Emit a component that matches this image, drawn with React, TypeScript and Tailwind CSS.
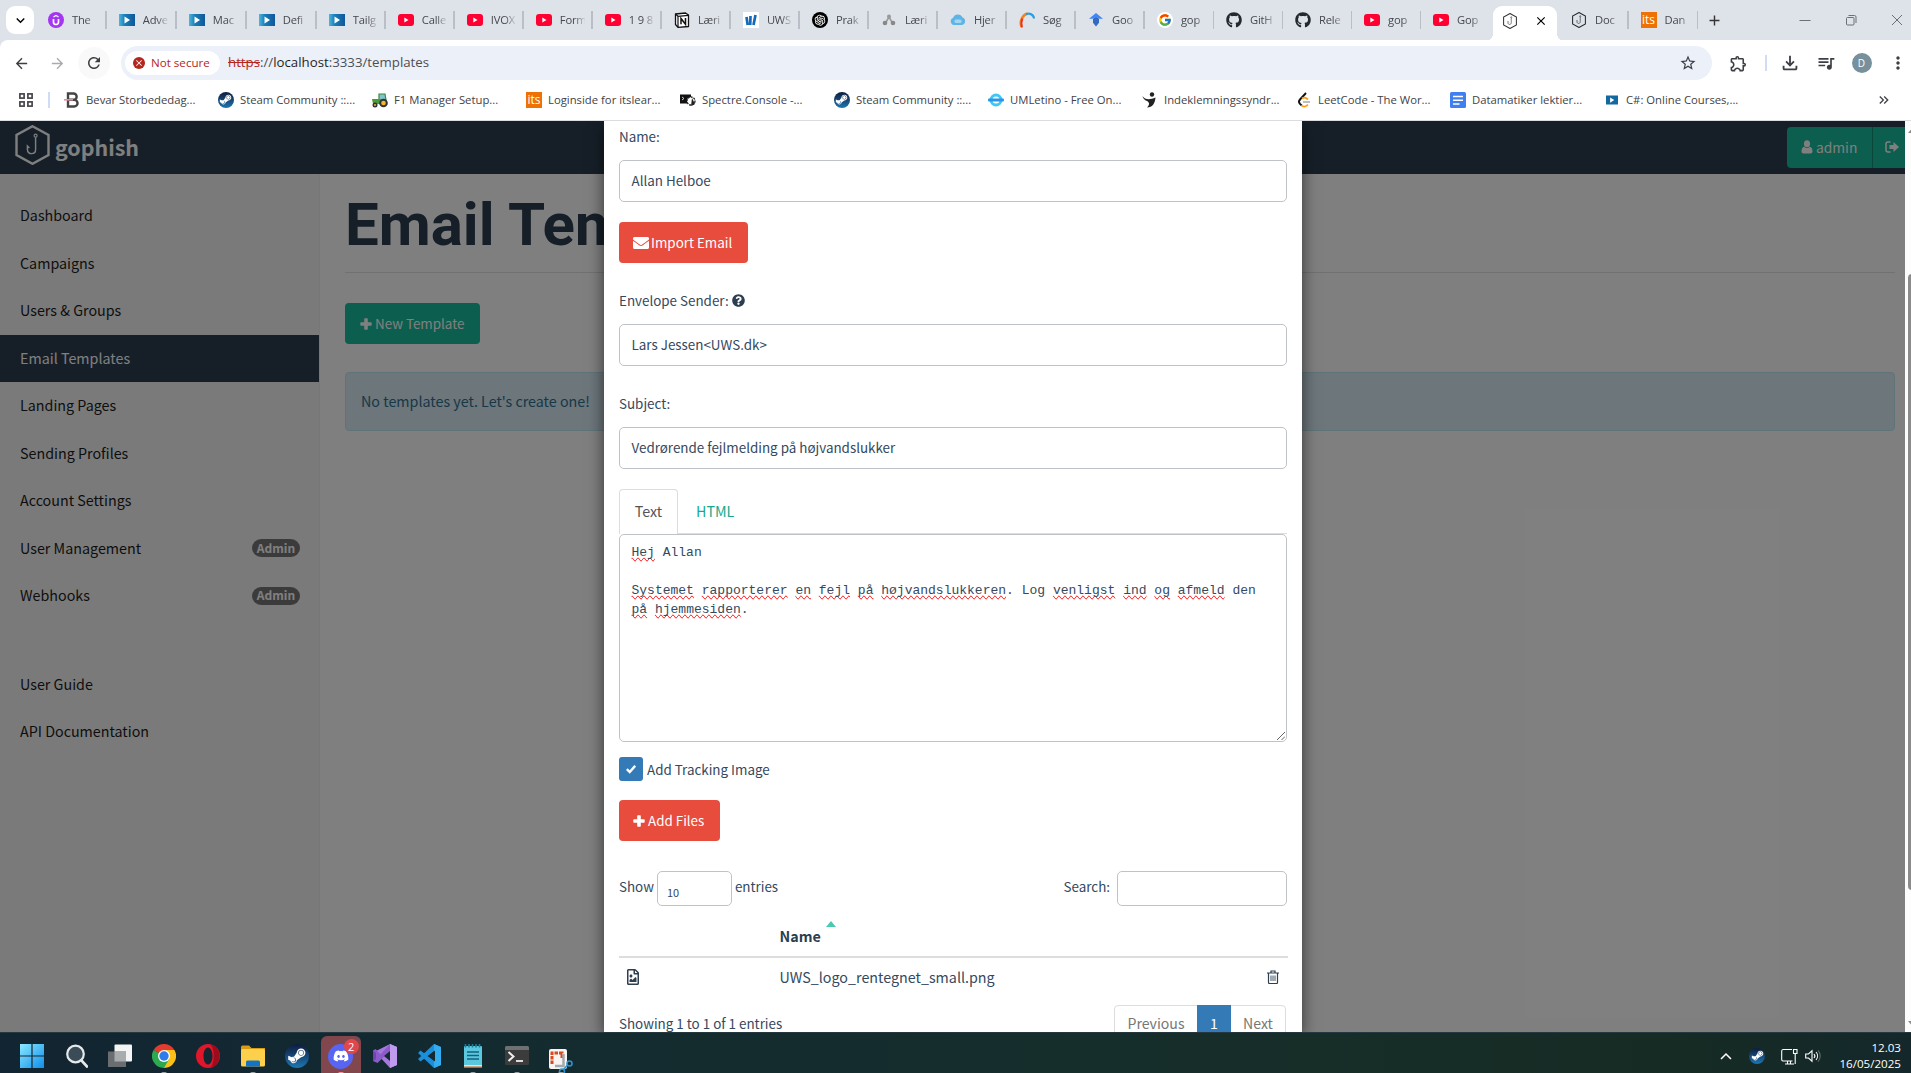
import React from 'react';
import {
  FaEnvelope,
  FaQuestionCircle,
  FaRegFileImage,
  FaGithub,
  FaSteamSymbol,
  FaDiscord,
} from 'react-icons/fa';
import { FcGoogle } from 'react-icons/fc';
import { AiOutlineOpenAI } from 'react-icons/ai';
import {
  MdArrowBack,
  MdArrowForward,
  MdRefresh,
  MdStarBorder,
  MdOutlineExtension,
  MdOutlineFileDownload,
  MdQueueMusic,
  MdMoreVert,
  MdClose,
  MdAdd,
  MdKeyboardArrowDown,
  MdKeyboardDoubleArrowRight,
} from 'react-icons/md';

/* ---------- favicons ---------- */

const Udemy = () => (
  <svg viewBox="0 0 16 16" className="size-4">
    <circle cx="8" cy="8" r="8" fill="#a435f0" />
    <path d="M5.500 7v3.200a2.500 2.300 0 0 0 5 0V7" fill="none" stroke="#fff" strokeWidth="1.700" />
    <path d="M5.500 5 8 3.500 10.500 5" fill="none" stroke="#fff" strokeWidth="1.300" />
  </svg>
);

const Play = () => (
  <svg viewBox="0 0 16 12" className="h-3 w-4">
    <defs>
      <linearGradient id="play" x1="0" x2="1">
        <stop offset="0" stopColor="#4db5e0" />
        <stop offset=".35" stopColor="#1b7fb8" />
        <stop offset="1" stopColor="#10579a" />
      </linearGradient>
    </defs>
    <rect width="16" height="12" fill="url(#play)" />
    <path d="M5.500 2.500v7l5.500-3.500z" fill="#fff" />
  </svg>
);

const SmallPlay = () => (
  <svg viewBox="0 0 16 12" className="h-2.5 w-3">
    <rect width="16" height="12" fill="#12699f" />
    <path d="M5.500 2.500v7l5.500-3.500z" fill="#fff" />
  </svg>
);

const YouTube = () => (
  <svg viewBox="0 0 16 12" className="h-3 w-4">
    <rect width="16" height="12" rx="3" fill="#ff0033" />
    <path d="M6.300 3.500v5L10.500 6z" fill="#fff" />
  </svg>
);

const Notion = () => (
  <svg viewBox="0 0 16 16" className="size-4">
    <path d="M1.500 2 11.500 1l3 2v11.500l-10.500.8L1.500 12.500z" fill="#fff" stroke="#111" strokeWidth="1.300" strokeLinejoin="round" />
    <path d="M1.500 2 4 4.300l10.500-.9M4 4.300v11" fill="none" stroke="#111" strokeWidth="1.200" />
    <path d="M7 12.300V6.500l4.500 5.800V6" fill="none" stroke="#111" strokeWidth="1.500" />
  </svg>
);

const Uws = () => (
  <svg viewBox="0 0 16 16" className="size-4">
    <rect width="16" height="16" fill="#fff" />
    <path d="M3.500 5l1.200 8M7.500 4l-.3 9M12.500 3l-2 10" stroke="#1469b8" strokeWidth="2.700" />
  </svg>
);

const OpenAi = () => (
  <span className="flex size-4 items-center justify-center rounded-full bg-black text-white">
    <AiOutlineOpenAI className="size-3.5" />
  </span>
);

const Nodes = () => (
  <svg viewBox="0 0 16 16" className="size-4">
    <path d="M8 5 4.500 11M8 5l3.500 6" stroke="#999" strokeWidth="1.500" />
    <circle cx="8" cy="4.500" r="2" fill="#999" />
    <circle cx="4" cy="11" r="2.300" fill="#888" />
    <circle cx="12" cy="11" r="2.300" fill="#888" />
  </svg>
);

const Cloud = () => (
  <svg viewBox="0 0 16 16" className="size-4">
    <path d="M4 13a3.800 3.800 0 0 1-.8-7.300A5 5 0 0 1 12.500 5.500 3.900 3.900 0 0 1 12 13z" fill="#5fb4e6" />
    <rect x="4.500" y="7.500" width="7" height="3.500" rx="1.500" fill="#a4d6f3" />
  </svg>
);

const Arc = () => (
  <svg viewBox="0 0 16 16" className="size-4">
    <path d="M2.500 15C.5 9 3.500 3 8.500 1.500" fill="none" stroke="#f58220" strokeWidth="2.600" />
    <path d="M3 15.500C2 12.500 2.300 9 3.500 6.500" fill="none" stroke="#e4332d" strokeWidth="1.800" />
    <path d="M7 2.200C10.500.5 14.500 2.500 15.200 6.500" fill="none" stroke="#2a9fe0" strokeWidth="2.200" />
  </svg>
);

const Scholar = () => (
  <svg viewBox="0 0 16 16" className="size-4">
    <path d="M8 1 1 6.800h4a3.400 3.400 0 0 1 6 0h4z" fill="#4285f4" />
    <path d="M5 6.800a3.400 3.400 0 0 1 6 0v4L8 14.500l-3-3.700z" fill="#356ac3" />
  </svg>
);

const Google = () => (
  <span className="flex size-4 items-center justify-center rounded-full bg-white">
    <FcGoogle className="size-3.5" />
  </span>
);

const Its = () => (
  <span className="flex size-4 items-center justify-center bg-[#ee7203] text-xs leading-4 text-white">its</span>
);

const Hex = ({ className = 'h-4 w-4', w = 1.3 }: { className?: string; w?: number }) => (
  <svg viewBox="0 0 35 40" className={className} fill="none" stroke="currentColor">
    <path d="M17.500 1.200 33.500 10v20l-16 8.800L1.500 30V10z" strokeWidth={w} />
    <circle cx="20.600" cy="10.700" r="1.500" strokeWidth={w * 0.5} />
    <path d="M20.600 12.200V24.500c0 5.500-8.200 5.500-8.200 0v-3.500l2 2" strokeWidth={w * 0.6} />
  </svg>
);

const Bevar = () => (
  <svg viewBox="0 0 16 16" className="size-4">
    <path d="M4 1.500h5.500a3 3 0 0 1 0 6.300H4zM4 7.800h6.200a3.200 3.200 0 0 1 0 6.700H4z" fill="none" stroke="#444" strokeWidth="2.400" />
    <path d="M0 7.800h9" stroke="#e58b9d" strokeWidth="1.600" />
  </svg>
);

const Steam = ({ className = 'size-4' }: { className?: string }) => (
  <span className={`${className} flex items-center justify-center rounded-full bg-gradient-to-b from-[#0d1c3f] to-[#1b78b3] text-white`}>
    <FaSteamSymbol className="size-[82%]" />
  </span>
);

const Tractor = () => (
  <svg viewBox="0 0 16 16" className="size-4">
    <path d="M7 2h6l1 6H7z" fill="#7fc6c9" stroke="#3d8a34" strokeWidth="1.200" />
    <path d="M0 7h9v5H1z" fill="#4a9c3a" />
    <circle cx="11.500" cy="11" r="4.300" fill="#333" />
    <circle cx="11.500" cy="11" r="2.300" fill="#f3b929" />
    <circle cx="3" cy="13" r="2.500" fill="#333" />
    <circle cx="3" cy="13" r="1" fill="#f3b929" />
  </svg>
);

const Spectre = () => (
  <svg viewBox="0 0 16 16" className="size-4">
    <rect y="2.500" width="11" height="9" fill="#111" />
    <path d="M2 5l2 1.500-2 1.500" stroke="#ccc" fill="none" />
    <circle cx="11" cy="9" r="4" fill="#fff" stroke="#222" strokeWidth="1.300" strokeDasharray="2 1" />
    <path d="M12 6l3 6-4 2" fill="#222" />
  </svg>
);

const Uml = () => (
  <svg viewBox="0 0 16 16" className="size-4">
    <circle cx="8" cy="8" r="5" fill="none" stroke="#3fc8f5" strokeWidth="3" />
    <rect y="6.600" width="16" height="2.800" rx="1" fill="#2a95ea" />
  </svg>
);

const Person = () => (
  <svg viewBox="0 0 16 16" className="size-4">
    <circle cx="10" cy="2.500" r="2.200" fill="#222" />
    <path d="M.5 4c2.500 4 7.500 4 13 1.500-.5 6-3 10-8.500 10 3-3 2.500-5 0-6.500C2.500 8 1 6.500.5 4z" fill="#222" />
  </svg>
);

const Leet = () => (
  <svg viewBox="0 0 16 16" className="size-4">
    <path d="M10 1 3.500 8" stroke="#111" strokeWidth="1.900" fill="none" />
    <path d="M3.800 7.600c-1.200 1.500-1 2.800 0 4l2 2" stroke="#111" strokeWidth="1.900" fill="none" />
    <path d="M5.500 13.200c1.500 2 4 2 6.500-.5M6 6.500c2-1.500 4-1 6 1" stroke="#ffa116" strokeWidth="1.900" fill="none" />
    <path d="M7 10h7" stroke="#b3b3b3" strokeWidth="1.700" />
  </svg>
);

const Docs = () => (
  <svg viewBox="0 0 16 16" className="size-4">
    <rect width="16" height="16" rx="1.500" fill="#3f7ff0" />
    <path d="M3 4.500h10M3 8.200h10M3 12h6.500" stroke="#fff" strokeWidth="1.500" />
  </svg>
);

/* ---------- shared glyphs ---------- */

const Plus = ({ className }: { className: string }) => (
  <svg viewBox="0 0 12 12" className={`${className} size-3`}>
    <path
      d="M5 .3h2a.8.8 0 0 1 .8.8v3.100h3.100a.8.8 0 0 1 .8.8v2a.8.8 0 0 1-.8.8H7.800v3.100a.8.8 0 0 1-.8.8H5a.8.8 0 0 1-.8-.8V7.800H1.100A.8.8 0 0 1 .3 7V5a.8.8 0 0 1 .8-.8h3.100V1.100A.8.8 0 0 1 5 .3z"
      fill="currentColor"
    />
  </svg>
);

const UserGlyph = () => (
  <svg viewBox="0 0 12 14" className="mr-[3px] h-3.5 w-3" fill="currentColor">
    <ellipse cx="6" cy="3.800" rx="3.100" ry="3.500" />
    <path d="M.5 11.500c0-2.800.9-4.700 2.700-4.800a4.200 4.200 0 0 0 5.600 0c1.800.1 2.700 2 2.700 4.800 0 1.200-.8 2-2 2h-7c-1.200 0-2-.8-2-2z" />
  </svg>
);

/* ---------- browser chrome ---------- */

type Tab = { icon: React.ReactNode; text: string };

const wideTabs: Tab[] = [
  { icon: <Udemy />, text: 'The' },
  { icon: <Play />, text: 'Adve' },
  { icon: <Play />, text: 'Mac' },
  { icon: <Play />, text: 'Defi' },
];

const tabs: Tab[] = [
  { icon: <Play />, text: 'Tailg' },
  { icon: <YouTube />, text: 'Calle' },
  { icon: <YouTube />, text: 'IVOX' },
  { icon: <YouTube />, text: 'Form' },
  { icon: <YouTube />, text: '1 9 8' },
  { icon: <Notion />, text: 'Læri' },
  { icon: <Uws />, text: 'UWS' },
  { icon: <OpenAi />, text: 'Prak' },
  { icon: <Nodes />, text: 'Læri' },
  { icon: <Cloud />, text: 'Hjer' },
  { icon: <Arc />, text: 'Søg' },
  { icon: <Scholar />, text: 'Goo' },
  { icon: <Google />, text: 'gop' },
  { icon: <FaGithub className="size-4" />, text: 'GitH' },
  { icon: <FaGithub className="size-4" />, text: 'Rele' },
  { icon: <YouTube />, text: 'gop' },
  { icon: <YouTube />, text: 'Gop' },
];

const lastTabs: Tab[] = [
  { icon: <Hex className="h-4 w-4" w={2.6} />, text: 'Doc' },
  { icon: <Its />, text: 'Dan' },
];

function TabItem({ tab, className, last }: { tab: Tab; className: string; last?: boolean }) {
  return (
    <div className={`${className} flex h-7 shrink-0 items-center pl-3`}>
      <span className="flex size-4 shrink-0 items-center justify-center text-[#24292f]">{tab.icon}</span>
      <span className="ml-2 w-[25px] flex-none overflow-hidden pt-px text-[11.200px] tracking-[-0.2px] whitespace-nowrap text-[#45484c] [mask-image:linear-gradient(to_right,black_55%,rgba(0,0,0,0.1))]">
        {tab.text}
      </span>
      <span className={last ? 'hidden' : 'ml-auto h-[18px] w-[1.500px] bg-[#b9bec7]'} />
    </div>
  );
}

function TabBar() {
  return (
    <div className="flex h-10 items-start bg-[#dee2e9] pt-0.5">
      <div className="mt-1 ml-1.5 flex h-7 w-7 items-center justify-center rounded-[9px] bg-white">
        <MdKeyboardArrowDown className="size-[17px] text-black" />
      </div>
      <div className="mt-1 ml-[2px] flex">
        {wideTabs.map((t, i) => (
          <TabItem key={i} tab={t} className={i === 0 ? 'w-[70.800px]' : 'w-[70px]'} />
        ))}
        {tabs.map((t, i) => (
          <TabItem key={i} tab={t} className="w-[69.020px]" last={i === tabs.length - 1} />
        ))}
      </div>
      <div className="relative mt-1 ml-[3px] flex h-[35px] w-16 items-center rounded-t-[9px] bg-white pb-1.5 pl-[9px]">
        <span className="absolute bottom-0 -left-2 size-2 bg-[radial-gradient(circle_at_0_0,transparent_8px,white_8px)]" />
        <span className="absolute -right-2 bottom-0 size-2 bg-[radial-gradient(circle_at_100%_0,transparent_8px,white_8px)]" />
        <Hex className="h-4 w-4 text-[#333]" w={2.6} />
        <MdClose className="ml-4 size-[14px] text-black" />
      </div>
      <div className="mt-1 ml-[2px] flex">
        {lastTabs.map((t, i) => (
          <TabItem key={i} tab={t} className="w-[69.500px]" />
        ))}
      </div>
      <MdAdd className="mt-2.5 ml-2 size-[17px] text-[#333]" />
      <div className="mt-2.5 mr-1.5 ml-auto flex items-center text-[#6c6f75]">
        <svg viewBox="0 0 16 16" className="mr-[30px] size-4" stroke="currentColor" fill="none">
          <path d="M2.500 8.500h11" />
        </svg>
        <svg viewBox="0 0 16 16" className="mr-[30px] size-4" stroke="currentColor" fill="none">
          <rect x="3.500" y="5.500" width="7.500" height="7.500" rx="1" />
          <path d="M5.500 3.500h6a1.500 1.500 0 0 1 1.500 1.500v6" />
        </svg>
        <svg viewBox="0 0 16 16" className="size-4" stroke="currentColor" fill="none">
          <path d="M3 3l10 10M13 3 3 13" />
        </svg>
      </div>
    </div>
  );
}

function Toolbar() {
  return (
    <div className="bg-[#dee2e9]">
      <div className="flex h-[46px] items-center rounded-tl-lg bg-white text-[#3c3f43]">
        <MdArrowBack className="ml-[13px] size-[17px]" />
        <MdArrowForward className="ml-[19px] size-[17px] text-[#a9abae]" />
        <div className="ml-3 flex size-8 items-center justify-center rounded-full bg-[#f9f9f9]">
          <MdRefresh className="size-[18px]" />
        </div>
        <div className="ml-[11px] flex h-[34px] w-[1591px] items-center rounded-full bg-[#ebf0f9] pl-1">
          <div className="flex h-6 w-[95px] items-center rounded-full bg-white pl-2 text-[11.600px] text-[#b3261e]">
            <span className="mr-1.5 flex size-3 items-center justify-center rounded-full bg-[#b3261e] text-white">
              <MdClose className="size-2.5" />
            </span>
            Not secure
          </div>
          <div className="ml-2 text-[13.250px] whitespace-nowrap text-[#4b4f54]">
            <span className="text-[#b3261e] line-through">https</span>://
            <span className="text-[#1f1f1f]">localhost</span>:3333/templates
          </div>
          <MdStarBorder className="mr-[15px] ml-auto size-[18px]" />
        </div>
        <MdOutlineExtension className="ml-[17px] size-[19px]" />
        <span className="ml-[17px] h-4 w-[1.500px] bg-[#cfdcf6]" />
        <MdOutlineFileDownload className="ml-[12px] size-[22px]" />
        <MdQueueMusic className="ml-[15px] size-[20px]" />
        <span className="ml-4 flex size-5 items-center justify-center rounded-full bg-[#78909c] text-[10px] text-white">D</span>
        <MdMoreVert className="ml-[16px] size-5" />
      </div>
    </div>
  );
}

const bookmarks: Tab[] = [
  { icon: <Bevar />, text: 'Bevar Storbededag...' },
  { icon: <Steam />, text: 'Steam Community ::...' },
  { icon: <Tractor />, text: 'F1 Manager Setup...' },
  { icon: <Its />, text: 'Loginside for itslear...' },
  { icon: <Spectre />, text: 'Spectre.Console -...' },
  { icon: <Steam />, text: 'Steam Community ::...' },
  { icon: <Uml />, text: 'UMLetino - Free On...' },
  { icon: <Person />, text: 'Indeklemningssyndr...' },
  { icon: <Leet />, text: 'LeetCode - The Wor...' },
  { icon: <Docs />, text: 'Datamatiker lektier...' },
  { icon: <SmallPlay />, text: 'C#: Online Courses,...' },
];

function Bookmarks() {
  return (
    <div className="flex h-[35px] items-center border-b border-[#dadce0] bg-white pb-1.5 text-[#3f4246]">
      <svg viewBox="0 0 14 14" className="ml-[19px] size-3.5" fill="none" stroke="#45484c" strokeWidth="1.700">
        <rect x=".9" y=".9" width="4.200" height="4.200" />
        <rect x="8.900" y=".9" width="4.200" height="4.200" />
        <rect x=".9" y="8.900" width="4.200" height="4.200" />
        <rect x="8.900" y="8.900" width="4.200" height="4.200" />
      </svg>
      <span className="ml-[15px] h-4 w-[1.500px] bg-[#cfdcf6]" />
      <div className="ml-[14.500px] flex">
        {bookmarks.map((b, i) => (
          <div key={i} className="flex w-[154px] items-center whitespace-nowrap">
            <span className="flex size-4 items-center justify-center">{b.icon}</span>
            <span className="ml-1.5 text-[11.300px]">{b.text}</span>
          </div>
        ))}
      </div>
      <MdKeyboardDoubleArrowRight className="mr-[19px] ml-auto size-4" />
    </div>
  );
}

/* ---------- dimmed page ---------- */

const nav: { label: string; active?: boolean; admin?: boolean }[] = [
  { label: 'Dashboard' },
  { label: 'Campaigns' },
  { label: 'Users & Groups' },
  { label: 'Email Templates', active: true },
  { label: 'Landing Pages' },
  { label: 'Sending Profiles' },
  { label: 'Account Settings' },
  { label: 'User Management', admin: true },
  { label: 'Webhooks', admin: true },
];

const itemClass = 'flex h-[47.500px] items-center pr-[19px] pb-0.5 pl-5 text-[14.300px]';

function Sidebar() {
  return (
    <div className="w-[320px] shrink-0 border-r border-[#eee] bg-[#f5f5f5] pt-[18px] text-[#1c1c1c]">
      {nav.map((n) => (
        <div key={n.label} className={`${itemClass} ${n.active ? 'bg-[#2c3e50] text-white' : ''}`}>
          {n.label}
          {n.admin && (
            <span className="mt-0.5 ml-auto flex h-[18px] w-12 items-center justify-center rounded-full bg-[#777] pb-px text-[12px] font-bold text-white">
              Admin
            </span>
          )}
        </div>
      ))}
      <div className="mt-[41px]">
        <div className={itemClass}>User Guide</div>
        <div className={itemClass}>API Documentation</div>
      </div>
    </div>
  );
}

function Page() {
  return (
    <div className="flex h-full w-[1905px] flex-col overflow-hidden bg-white">
      <div className="flex h-[53px] shrink-0 items-center bg-[#2c3e50] pl-[15px] text-white">
        <Hex className="mb-1.5 h-10 w-[35px]" w={2.400} />
        <span className="mb-px ml-[5px] text-[21.400px] leading-6 font-bold">gophish</span>
        <div className="mb-px ml-auto flex h-[41px] rounded-l bg-[#18bc9c] text-[14.300px]">
          <div className="flex w-[85px] items-center pl-[14px]">
            <UserGlyph />
            <span className="text-[13.800px]">admin</span>
          </div>
          <div className="flex w-[33px] items-center border-l border-[#128f76] pl-3">
            <svg viewBox="0 0 14 12" className="h-3 w-3.5">
              <path d="M5.500 1H3a2 2 0 0 0-2 2v6a2 2 0 0 0 2 2h2.500" fill="none" stroke="#fff" strokeWidth="1.500" />
              <path d="M4.500 4h4V1L14 6l-5.500 5V8h-4z" fill="#fff" />
            </svg>
          </div>
        </div>
      </div>
      <div className="flex flex-1">
        <Sidebar />
        <div className="flex-1 pr-[10px] pl-[25px]">
          <h1 className="h-[99px] border-b border-[#e2e2e2] pt-[15px] font-[Roboto] text-[60px] leading-[72px] font-bold text-[#2c3e50]">
            Email Templates
          </h1>
          <div className="mt-[30px] flex h-[41px] w-[135px] items-center rounded bg-[#18bc9c] pl-[15px] text-[13.400px] text-white">
            <Plus className="mr-[3px]" />
            New Template
          </div>
          <div className="mt-[28px] flex h-[59px] items-center rounded border border-[#bce8f1] bg-[#d9edf7] pb-0.5 pl-[15px] text-[14.300px] text-[#31708f]">
            No templates yet. Let's create one!
          </div>
        </div>
      </div>
    </div>
  );
}

/* ---------- modal ---------- */

const inputClass = 'flex h-[42px] items-center rounded-[5px] border border-[#bfc3c7] pb-0.5 pl-[11.500px]';

const Wavy = ({ children }: { children: React.ReactNode }) => (
  <span className="[text-decoration-line:spelling-error]">{children}</span>
);

function Modal() {
  return (
    <div className="absolute top-0 left-[604px] h-full w-[698px] overflow-hidden bg-white px-[15px] text-[13.400px] leading-5 text-[#34495e] shadow-[0_5px_15px_rgba(0,0,0,0.6)]">
      <div className="flex h-8 items-center pb-0.5">Name:</div>
      <div className={`${inputClass} mt-[7px]`}>Allan Helboe</div>
      <div className="mt-5 flex h-[41px] w-[129px] items-center rounded bg-[#e74c3c] pl-3.5 text-white">
        <FaEnvelope className="mr-0.5 size-4" />
        <span className="pb-0.5">Import Email</span>
      </div>
      <div className="mt-[27px] flex items-center">
        Envelope Sender:
        <FaQuestionCircle className="ml-[3px] size-[13px] text-[#2c3e50]" />
      </div>
      <div className={`${inputClass} mt-[14px]`}>Lars Jessen&lt;UWS.dk&gt;</div>
      <div className="mt-[27px]">Subject:</div>
      <div className={`${inputClass} mt-[14px]`}>Vedrørende fejlmelding på højvandslukker</div>

      <div className="mt-5 flex h-[45px] border-b border-[#ddd] text-[14.300px]">
        <div className="-mb-px flex h-[45px] w-[59px] items-center justify-center rounded-t border border-b-0 border-[#ddd] bg-white pb-0.5 text-[#555]">Text</div>
        <div className="ml-[18px] flex items-center text-[#18a98c]">HTML</div>
      </div>
      <div className="relative h-[208px] rounded-[5px] border border-[#bfc3c7] px-[11.500px] pt-2 font-[Liberation_Mono] text-[13px] leading-[19px] whitespace-pre">
        <div><Wavy>Hej</Wavy> Allan</div>
        <div>&nbsp;</div>
        <div>
          <Wavy>Systemet</Wavy> <Wavy>rapporterer</Wavy> <Wavy>en</Wavy> <Wavy>fejl</Wavy> <Wavy>på</Wavy>{' '}
          <Wavy>højvandslukkeren</Wavy>. Log <Wavy>venligst</Wavy> <Wavy>ind</Wavy> <Wavy>og</Wavy> <Wavy>afmeld</Wavy> den
        </div>
        <div><Wavy>på</Wavy> <Wavy>hjemmesiden</Wavy>.</div>
        <svg viewBox="0 0 8 8" className="absolute right-px bottom-px size-2" stroke="#555" strokeWidth=".9">
          <path d="M0 8 8 0M4.500 8 8 4.500" />
        </svg>
      </div>

      <div className="mt-[15px] flex h-6 items-center">
        <span className="mr-1 flex size-6 items-center justify-center rounded-[3px] bg-[#337ab7] text-white">
          <svg viewBox="0 0 10 10" className="size-2.5" fill="none" stroke="currentColor" strokeWidth="2.400">
            <path d="M.8 5.200 3.700 8 9.200 1.800" />
          </svg>
        </span>
        Add Tracking Image
      </div>
      <div className="mt-[19px] flex h-[41px] w-[101px] items-center rounded bg-[#e74c3c] pl-3.5 text-white">
        <Plus className="mr-[3px]" />
        <span className="pb-0.5">Add Files</span>
      </div>

      <div className="mt-[30px] flex h-9">
        <span className="mt-[5px]">Show</span>
        <span className="ml-[3px] flex h-[35px] w-[75px] items-end rounded-[5px] border border-[#bfc3c7] pb-[3px] pl-[9px] text-[11px]">10</span>
        <span className="mt-[5px] ml-[3px]">entries</span>
        <span className="mt-[5px] ml-auto">Search:</span>
        <span className="ml-[7px] h-[35px] w-[170px] rounded-[5px] border border-[#bfc3c7]" />
      </div>

      <div className="-mr-px flex h-[51px] border-b-2 border-[#ddd] pl-[160.500px] text-[14.300px] font-bold text-[#2c3e50]">
        <span className="mt-[19px]">Name</span>
        <svg viewBox="0 0 10 6" className="mt-3.5 ml-[5px] h-1.5 w-2.5">
          <path d="M5 0l5 6H0z" fill="#48c9b0" />
        </svg>
      </div>
      <div className="flex h-[39px] items-center pr-[8px] pb-0.5 pl-[7px] text-[14.300px]">
        <FaRegFileImage className="h-4 w-[14px] text-[#2c3e50]" />
        <span className="ml-[139.500px]">UWS_logo_rentegnet_small.png</span>
        <svg viewBox="0 0 12 14" className="ml-auto h-3.5 w-3" fill="none" stroke="#2c3e50">
          <path d="M0 3h12M4 3V1h4v2M1.500 3v9.500a1 1 0 0 0 1 1h7a1 1 0 0 0 1-1V3" strokeWidth="1.200" />
          <path d="M4 5.500v5.500M6 5.500v5.500M8 5.500v5.500" strokeWidth=".9" />
        </svg>
      </div>
      <div className="mt-2 flex">
        <span className="mt-2">Showing 1 to 1 of 1 entries</span>
        <div className="mr-px ml-auto flex h-[41px] rounded border border-[#ddd] text-[14.100px] text-[#777]">
          <span className="flex w-[82px] items-center justify-center pb-1.5">Previous</span>
          <span className="-mt-px flex w-[34px] items-center justify-center bg-[#337ab7] pb-[5px] text-white">1</span>
          <span className="flex w-[54px] items-center justify-center pb-1.5">Next</span>
        </div>
      </div>
    </div>
  );
}

/* ---------- taskbar ---------- */

const WinLogo = () => (
  <svg viewBox="0 0 24 24" className="size-6">
    <defs>
      <linearGradient id="win" x1="0" y1="0" x2="1" y2="1">
        <stop offset="0" stopColor="#8be8ff" />
        <stop offset="1" stopColor="#0f8fea" />
      </linearGradient>
    </defs>
    <path d="M0 0h11.400v11.400H0zM12.600 0H24v11.400H12.600zM0 12.600h11.400V24H0zM12.600 12.600H24V24H12.600z" fill="url(#win)" />
  </svg>
);

const Chrome = () => (
  <svg viewBox="0 0 24 24" className="size-6">
    <path d="M12 12 1.600 6A12 12 0 0 1 22.400 6z" fill="#e33b2e" />
    <path d="M12 12 22.400 6A12 12 0 0 1 12 24z" fill="#fbc116" />
    <path d="M12 12V24A12 12 0 0 1 1.600 6z" fill="#2da94f" />
    <path d="M12 6h10.400L17.200 15 12 24l5-9z" fill="#fbc116" />
    <path d="M1.600 6 12 24l5.200-9H7z" fill="#2da94f" />
    <circle cx="12" cy="12" r="6" fill="#fff" />
    <circle cx="12" cy="12" r="4.700" fill="#2f7bea" />
  </svg>
);

const Opera = () => (
  <svg viewBox="0 0 24 24" className="size-6">
    <path d="M12 0a12 12 0 1 0 0 24 12 12 0 0 0 0-24zm0 3.500c2.700 0 4.500 3.800 4.500 8.500s-1.800 8.500-4.500 8.500S7.500 16.700 7.500 12 9.300 3.500 12 3.500z" fill="#e0162b" />
    <path d="M14 .2A12 12 0 0 1 14 23.800C19 21 19 3 14 .2z" fill="#9d0c1c" />
  </svg>
);

const Folder = () => (
  <svg viewBox="0 0 24 24" className="size-6">
    <path d="M0 3a1.500 1.500 0 0 1 1.500-1.500H8L10.500 4H24v6H0z" fill="#d99a14" />
    <rect y="5" width="24" height="17.500" rx="1.500" fill="#fcd04a" />
    <path d="M5 22.500V18a1.500 1.500 0 0 1 1.500-1.500h11A1.500 1.500 0 0 1 19 18v4.500z" fill="#1673c4" />
  </svg>
);

const VisualStudio = () => (
  <svg viewBox="0 0 24 24" className="size-6">
    <path d="M17 0 24 3v18l-7 3L5 11l-3 2.500V7l3-1z" fill="#a678de" />
    <path d="M0 6.500 2.500 5l5 5.500L17 0v7L4.500 19 0 17z" fill="#8a5bc9" />
    <path d="M0 6.500v11L3 15V9z" fill="#7243b4" />
    <path d="M17 0 24 3v18l-7 3z" fill="#c09aee" />
    <path d="M11 12l6-5v10z" fill="#152a2e" />
  </svg>
);

const VsCode = () => (
  <svg viewBox="0 0 24 24" className="size-6">
    <path d="M17 0 24 3v18l-7 3L1 9l2.500-2.500L18 17.500V6.500L3.500 17.500 1 15z" fill="#1c8fdc" />
    <path d="M17 0 24 3v18l-7 3z" fill="#33acf0" />
    <path d="M18 6.500v11L11 12z" fill="#152a2e" />
  </svg>
);

const Notepad = () => (
  <svg viewBox="0 0 20 24" className="h-6 w-5">
    <rect x="1" y="2" width="18" height="20" rx="1" fill="#5cc8e0" />
    <rect x="1" y="21" width="18" height="2.500" fill="#e8e4dc" />
    <rect x="1" y="22.500" width="18" height="1.500" fill="#b86a28" />
    <path d="M2.500 0v3.500M6 0v3.500M9.500 0v3.500M13 0v3.500M16.500 0v3.500" stroke="#1c7d9a" strokeWidth="1.600" />
    <path d="M4 8h12M4 11.500h12M4 15h12" stroke="#12627c" strokeWidth="1.600" />
  </svg>
);

const Terminal = () => (
  <svg viewBox="0 0 24 20" className="h-5 w-6">
    <rect width="24" height="19" rx="1.500" fill="#3c3c3c" />
    <path d="M0 1.500A1.500 1.500 0 0 1 1.500 0h21A1.500 1.500 0 0 1 24 1.500V4H0z" fill="#6e7072" />
    <path d="M3.500 6l5 4.500-5 4.500" fill="none" stroke="#eee" strokeWidth="2" />
    <path d="M11 15h7" stroke="#eee" strokeWidth="1.800" />
  </svg>
);

const Snip = () => (
  <svg viewBox="0 0 26 26" className="mt-3 size-[26px]">
    <rect x="1" y="0" width="18" height="20" rx="2" fill="#f7f4f2" />
    <path d="M4 15V4h10v5" fill="none" stroke="#d94a22" strokeWidth="3" strokeDasharray="3.500 1" />
    <path d="M15.500 5v12H7" fill="none" stroke="#a5a9ad" strokeWidth="2.500" />
    <circle cx="21.500" cy="14.500" r="2.500" fill="none" stroke="#2b93cf" strokeWidth="1.600" />
    <circle cx="14" cy="22.500" r="2.500" fill="none" stroke="#2b93cf" strokeWidth="1.600" />
    <path d="M19.500 16l-4 4.500" stroke="#2b93cf" strokeWidth="1.600" />
  </svg>
);

const TaskSearch = () => (
  <svg viewBox="0 0 24 24" className="size-6" fill="none">
    <circle cx="11.500" cy="10" r="8.300" fill="#3a4c57" stroke="#e6e9eb" strokeWidth="2.200" />
    <path d="M17.500 16.500 23 22.500" stroke="#e6e9eb" strokeWidth="2.600" strokeLinecap="round" />
  </svg>
);

const TaskView = () => (
  <svg viewBox="0 0 24 24" className="size-6">
    <rect x="6.500" y="0.500" width="17.500" height="17" rx="1" fill="#f4f4f4" />
    <path d="M0 7.500h18V23H0z" fill="#6a6e70" />
    <path d="M6.500 7.500H18v10H6.500z" fill="#a9acad" />
  </svg>
);

const apps: { icon: React.ReactNode; open?: boolean; hot?: boolean }[] = [
  { icon: <WinLogo /> },
  { icon: <TaskSearch /> },
  { icon: <TaskView /> },
  { icon: <Chrome />, open: true },
  { icon: <Opera /> },
  { icon: <Folder />, open: true },
  { icon: <Steam className="size-6" /> },
  {
    icon: (
      <span className="flex size-[25px] items-center justify-center rounded-full bg-[#5865f2] text-white">
        <FaDiscord className="size-4" />
      </span>
    ),
    open: true,
    hot: true,
  },
  { icon: <VisualStudio /> },
  { icon: <VsCode /> },
  { icon: <Notepad />, open: true },
  { icon: <Terminal />, open: true },
  { icon: <Snip />, open: true },
];

function Taskbar() {
  return (
    <div className="flex h-[41px] shrink-0 overflow-hidden border-t border-[#26383f] bg-[linear-gradient(to_right,#122532,#132a30_25%,#162e2b_60%,#162b23_88%,#14282c)] text-white">
      <div className="flex pl-2.5">
        {apps.map((a, i) => (
          <div key={i} className="relative flex w-[44.100px] justify-center">
            <div className={`flex h-[46px] w-10 items-center justify-center ${a.hot ? 'mt-[3px] rounded-md bg-[#81474c] pb-[6px]' : ''}`}>
              {a.icon}
            </div>
            {a.hot && (
              <span className="absolute top-[6px] right-1 flex size-[15px] items-center justify-center rounded-full bg-[#e0474c] text-[11px] leading-none">2</span>
            )}
            {a.open && <span className={`absolute top-[38.500px] h-1 w-1.5 rounded-full ${a.hot ? 'bg-[#ff8f96]' : 'bg-[#9aa3a6]'}`} />}
          </div>
        ))}
      </div>
      <div className="mt-[5px] mr-2.5 ml-auto flex h-9 items-center">
        <svg viewBox="0 0 12 8" className="mr-[17px] h-2 w-3" fill="none" stroke="#fff" strokeWidth="1.500">
          <path d="M1 7l5-5 5 5" />
        </svg>
        <Steam className="mr-4 size-4" />
        <svg viewBox="0 0 17 17" className="mr-[7px] size-[17px]" fill="none" stroke="#fff" strokeWidth="1.100">
          <path d="M11 1.500H2A1.500 1.500 0 0 0 .7 3v8.500A1.500 1.500 0 0 0 2 13h9.500M4 16h9M6.500 13v3M9.500 13v3" />
          <path d="M12.500 1.500h3.500v4h-3.500zM14.200 5.500V16" />
        </svg>
        <svg viewBox="0 0 16 14" className="h-3.5 w-4" fill="none" stroke="#fff" strokeWidth="1.100">
          <path d="M.7 5h2.800L7 1.800v10.400L3.500 9H.7zM9 5a3 3 0 0 1 0 4M11 3a6 6 0 0 1 0 8" />
          <path d="M13 1.300a8.500 8.500 0 0 1 0 11.400" stroke="#5c6b68" />
        </svg>
        <div className="ml-[18px] text-right text-[11.600px] leading-4">
          <div>12.03</div>
          <div>16/05/2025</div>
        </div>
      </div>
    </div>
  );
}

export default function App() {
  return (
    <div className="flex h-[1073px] w-[1911px] flex-col overflow-hidden bg-white font-['Open_Sans',sans-serif]">
      <TabBar />
      <Toolbar />
      <Bookmarks />
      <div className="relative h-[911px] overflow-hidden font-['Noto_Sans_CJK_SC',sans-serif]">
        <Page />
        <div className="absolute inset-y-0 left-0 w-[1905px] bg-black/50" />
        <Modal />
        <div className="absolute inset-y-0 right-0 w-1.5 overflow-hidden bg-[#fcfcfc]">
          <div className="absolute top-[153px] left-[3px] h-[616px] w-2 rounded-full bg-[#8b8b8b]" />
          <div className="absolute top-[6px] left-[3px] size-0 border-x-[5px] border-b-[6px] border-x-transparent border-b-[#8b8b8b]" />
          <div className="absolute bottom-[5px] left-[3px] size-0 border-x-[5px] border-t-[6px] border-x-transparent border-t-[#8b8b8b]" />
        </div>
      </div>
      <Taskbar />
    </div>
  );
}
